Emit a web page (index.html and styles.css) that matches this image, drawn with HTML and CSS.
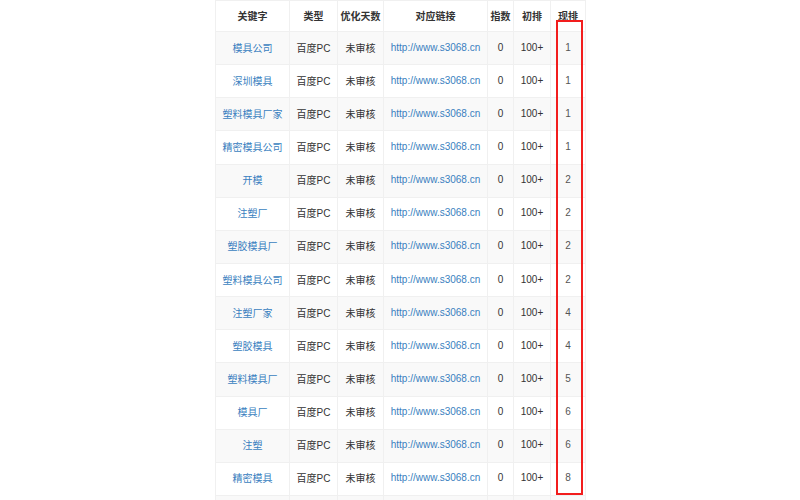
FILE: index.html
```html
<!DOCTYPE html>
<html lang="zh-CN">
<head>
    <meta charset="UTF-8">
    <title>关键字排名</title>
    <link rel="stylesheet" href="styles.css">
</head>
<body>

<div class="rank-wrap">
    <table class="rank-table">
        <colgroup>
            <col class="col-kw">
            <col class="col-type">
            <col class="col-days">
            <col class="col-link">
            <col class="col-idx">
            <col class="col-first">
            <col class="col-now">
        </colgroup>
        <thead>
            <tr>
                <th>关键字</th>
                <th>类型</th>
                <th>优化天数</th>
                <th>对应链接</th>
                <th>指数</th>
                <th>初排</th>
                <th>现排</th>
            </tr>
        </thead>
        <tbody id="rank-body"></tbody>
    </table>
    <div class="mark-box"></div>
</div>

<script>
    const rows = [
        ['模具公司', 1], ['深圳模具', 1], ['塑料模具厂家', 1], ['精密模具公司', 1],
        ['开模', 2], ['注塑厂', 2], ['塑胶模具厂', 2], ['塑料模具公司', 2],
        ['注塑厂家', 4], ['塑胶模具', 4], ['塑料模具厂', 5], ['模具厂', 6],
        ['注塑', 6], ['精密模具', 8]
    ];

    const body = document.getElementById('rank-body');
    rows.forEach(function (r) {
        const tr = document.createElement('tr');
        tr.innerHTML = `
            <td><a href="#">${r[0]}</a></td>
            <td>百度PC</td>
            <td>未审核</td>
            <td><a href="#" class="url">http://www.s3068.cn</a></td>
            <td>0</td>
            <td>100+</td>
            <td class="now">${r[1]}</td>
        `;
        body.appendChild(tr);
    });

    // the next row is only partly in view
    const last = document.createElement('tr');
    last.innerHTML = '<td></td><td></td><td></td><td></td><td></td><td></td><td></td>';
    body.appendChild(last);
</script>

</body>
</html>
```

FILE: styles.css
```css
body {
    margin: 0;
    padding: 0;
    background-color: #fff;
    color: #333;
    font-family: "Liberation Sans", "Noto Sans CJK SC", sans-serif;
    font-size: 10px;
    overflow: hidden;
}
.rank-wrap {
    position: relative;
    width: 370px;
    margin: 0 auto;
}
.rank-table {
    width: 370px;
    border-collapse: collapse;
    table-layout: fixed;
}
.rank-table th,
.rank-table td {
    border: 1px solid #f0f0f0;
    text-align: center;
    padding: 0 0 2px;
    white-space: nowrap;
    overflow: hidden;
}
.rank-table th {
    height: 28px;
    font-weight: bold;
    color: #333;
    background-color: #fff;
}
.rank-table td {
    height: 30.15px;
}
.rank-table tbody tr:nth-child(odd) {
    background-color: #f9f9f9;
}
.rank-table a {
    color: #3a7fc0;
    text-decoration: none;
}
.rank-table .now {
    color: #555;
}
.col-kw { width: 74px; }
.col-type { width: 48px; }
.col-days { width: 46px; }
.col-link { width: 104px; }
.col-idx { width: 26px; }
.col-first { width: 37px; }
.col-now { width: 35px; }
.mark-box {
    position: absolute;
    left: 341px;
    top: 20px;
    width: 23px;
    height: 471px;
    border: 2px solid #f21d1d;
}
```
